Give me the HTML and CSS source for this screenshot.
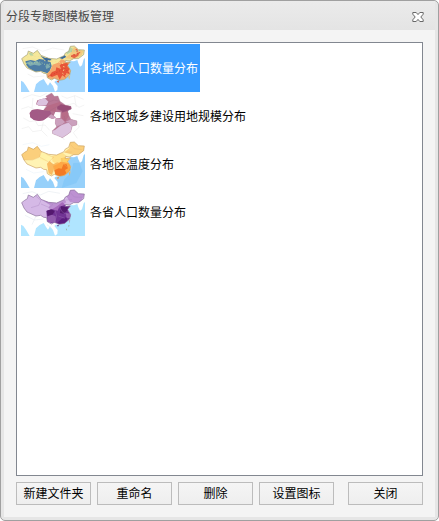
FILE: index.html
```html
<!DOCTYPE html>
<html lang="zh-CN">
<head>
<meta charset="utf-8">
<title>分段专题图模板管理</title>
<link rel="stylesheet" href="styles.css">
</head>
<body>
<svg class="defs" aria-hidden="true">
  <defs>
    <path id="country" d="M17 50L26 43L34 38L37 27L52 34L64 25L75 40L98 49L122 51L144 41L148 33L158 28L163 13L175 12L187 23L205 24L203 38L187 50L173 50L160 57L149 55L147 61L163 60L155 70L164 86L161 99L146 112L130 115L115 109L106 114L94 107L92 95L83 94L74 88L60 90L33 78L24 66Z"/>
    <path id="coast" d="M15 6H207V48L203 52L198 70L192 74L187 64L184 54L174 58L160 57L163 62L156 70L164 86L161 99L146 112L130 115L119 116L115 120L125 132L124 144L117 149L111 132L102 121L96 131L90 123L83 111L71 117L60 127L54 150H41L30 131L22 120L15 116Z"/>
    <clipPath id="country-clip"><use href="#country"/></clipPath>
  </defs>
</svg>
<main class="dialog">
  <header class="titlebar">
    <h1>分段专题图模板管理</h1>
    <button class="close" type="button" aria-label="关闭窗口">
      <svg viewBox="0 0 12 10"><path d="M.8.5H4.2L6 2.6 7.8.5H11.2V2.2L8.8 5 11.2 7.8V9.5H7.8L6 7.4 4.2 9.5H.8V7.8L3.2 5 .8 2.2Z"/></svg>
    </button>
  </header>
  <section class="content">
    <ul class="templates">
      <li>
        <svg class="thumb" viewBox="15 6 192 144">
          <path fill="#9fd5ff" d="M15 6H207V150H15Z"/><use href="#coast" fill="#fff"/>
          <path d="M20 20L50 15L80 28L110 18L145 24M35 96L53 105L85 102" fill="none" stroke="#eee" stroke-width="2"/>
          <use href="#country" fill="#f1e498"/>
          <g clip-path="url(#country-clip)">
            <path fill="#4d7da5" d="M28 58L44 54L58 57L70 51L88 53L104 61L107 73L101 87L94 94L76 88L57 89L38 78L31 69Z"/>
            <path fill="#80adb0" d="M31 62L43 57L52 62L61 55L70 63L78 66L70 71L55 68L42 72ZM88 71L98 67L103 75L91 81Z"/>
            <path fill="#f4e89b" d="M37 33L51 28L68 34L76 46L62 53L50 49L30 54L22 51ZM106 53L126 49L137 60L124 72L105 65Z"/>
            <path fill="#3a6a9b" d="M73 41L88 48L97 46L107 54L91 58ZM128 47L145 39L151 45L139 51Z"/>
            <path fill="#f5a66b" d="M110 68L126 62L137 51L149 57L164 61L166 88L157 107L129 118L95 108L91 98L104 83Z"/>
            <path fill="#e85538" d="M137 65L151 63L158 65L154 75L163 79L157 87L162 97L151 93L149 107L139 100L131 113L124 98L108 105L100 101L108 90L119 86L121 76L135 81L131 70Z"/>
            <path fill="#f3ca7e" d="M147 49L163 35L166 23L179 13L188 22L202 27L197 39L185 47L170 51Z"/>
            <path fill="#e76645" d="M165 42L173 36L182 38L183 32L191 31L187 41L175 49L168 46ZM178 22L183 20L187 28L182 31Z"/>
            <path fill="#b9d4a3" d="M151 32L162 15L171 21L165 31L153 37ZM38 34L46 32L53 40L45 43Z"/>
          </g>
          <g clip-path="url(#country-clip)" fill="none">
            <path d="M23 49L45 42L68 44L86 56L113 58L139 62L145 78L140 94L152 105" stroke="#f5df91" stroke-width="3" stroke-dasharray="4 7"/>
            <path d="M97 103L112 97L130 87L145 78L158 91M165 43L178 38L193 31" stroke="#ce3f31" stroke-width="3" stroke-dasharray="3 6"/>
            <path d="M30 65L50 63L73 60L88 68L103 66M157 29L171 27L193 25" stroke="#a3c9a0" stroke-width="3" stroke-dasharray="3 5"/>
          </g>
          <use href="#country" class="outline" stroke="#a4a17c"/>
          <path fill="#e55e3d" d="M122 118L130 115L127 123Z"/><path fill="#e5bd72" d="M157 106L163 99L160 113Z"/>
        </svg>
        <button class="name selected" type="button" aria-pressed="true">各地区人口数量分布</button>
      </li>
      <li>
        <svg class="thumb" viewBox="15 6 192 144">
          <path fill="#fff" d="M15 6H207V150H15Z"/>
          <path d="M20 25L48 14L72 20L92 10M16 57L37 50L61 61M22 84L42 95L58 92L66 107L87 105L101 121M17 116L38 110L50 125L76 121L94 139M137 18L153 25L177 17L203 28M153 45L174 40L189 52L205 45M170 71L202 77M181 91L190 111L172 128L184 145M51 24L48 54M82 96L76 121M175 17L181 51M131 129L145 150" fill="none" stroke="#ededed" stroke-width="2"/>
          <path fill="#b97795" d="M89 19L107 9L115 19L126 18L132 34L148 45L165 49L166 57L155 62L158 75L165 88L183 93L182 105L169 108L164 126L153 134L139 143L124 136L110 131L109 122L122 110L117 98L119 85L133 84L134 67L118 66L113 77L120 83L109 87L96 81L82 91L69 93L54 90L43 82L41 69L48 60L64 58L83 61L92 48L69 47L60 43L64 31L78 27L93 23Z"/>
          <path fill="#dcc3df" d="M61 43L68 30L86 24L97 35L91 46L72 47ZM117 120L137 104L157 97L168 108L164 126L153 134L139 143L110 131L109 122Z"/>
          <path fill="#a35a86" d="M48 60L64 58L83 61L102 62L106 72L96 81L82 91L69 93L54 90L43 82L41 69Z"/>
          <path fill="#984d77" d="M123 48L133 42L148 46L165 49L166 57L155 62L157 73L143 76L136 62L124 58Z"/>
          <path fill="#b76b87" d="M95 47L121 39L132 35L134 44L122 51L119 65L101 63L83 61ZM137 68L155 62L158 79L147 96L137 86Z"/>
          <path fill="#cba0bd" d="M119 85L137 86L147 96L137 105L122 110L117 98ZM109 87L120 82L113 77L105 73L96 81ZM147 96L165 88L183 93L182 105L169 108L157 97Z"/>
          <path d="M93 23L100 35L91 47L83 61L102 62L121 51L133 42M101 35L114 30L132 34M101 63L113 77M63 59L70 74L66 91M123 58L143 64L155 62M122 110L141 103L158 97M145 78L148 95" fill="none" stroke="#9d6885"/>
          <path d="M89 19L107 9L115 19L126 18L132 34L148 45L165 49L166 57L155 62L158 75L165 88L183 93L182 105L169 108L164 126L153 134L139 143L110 131L109 122L122 110L117 98" fill="none" stroke="#b696a4"/>
        </svg>
        <button class="name" type="button">各地区城乡建设用地规模分布</button>
      </li>
      <li>
        <svg class="thumb" viewBox="15 6 192 144">
          <path fill="#96d0fa" d="M15 6H207V150H15Z"/><path fill="#70bdf5" d="M145 124L165 105L172 75L190 74L200 100L181 135L137 150Z" opacity=".4"/><use href="#coast" fill="#fff"/>
          <path d="M20 20L50 14L76 25L100 20M30 94L53 105L83 101" fill="none" stroke="#edf5fb" stroke-width="2"/>
          <use href="#country" fill="#fff3b4"/>
          <g clip-path="url(#country-clip)">
            <path fill="#fbcf7c" d="M15 45L38 27L70 22L78 40L72 56L50 65L20 66ZM145 43L160 31L162 6L207 20V48L172 51Z"/>
            <path fill="#fff2a7" d="M73 44L95 49L114 58L99 70L72 66Z"/>
            <path fill="#ffe18c" d="M109 54L140 44L158 60L144 76L120 78L109 70Z"/>
            <path fill="#f9ba61" d="M93 77L101 69L111 79L124 73L138 77L130 91L114 94L107 111L98 106Z"/>
            <path fill="#ffa744" d="M111 84L124 79L137 69L154 73L167 82L166 98L153 117L121 115Z"/>
            <path fill="#f37a25" d="M115 97L128 91L137 92L142 79L152 79L156 91L147 96L151 106L137 116L118 111Z"/>
            <path fill="#ffcf66" d="M134 61L149 57L166 65L152 74L135 71Z"/>
            <path d="M75 43L70 58L49 66L22 66M72 58L98 72L113 58L91 49M108 75L116 91L107 112M137 60L140 76L155 88M164 20L175 32L199 35M145 43L167 42" fill="none" stroke="#ebb36a"/>
          </g>
          <use href="#country" class="outline" stroke="#cba264"/><path fill="#f57e25" d="M123 119L129 117L126 124Z"/><path fill="#e5b36f" d="M158 104L164 99L161 114Z"/>
        </svg>
        <button class="name" type="button">各地区温度分布</button>
      </li>
      <li>
        <svg class="thumb" viewBox="15 6 192 144">
          <path fill="#b0e5ff" d="M15 6H207V150H15Z"/><use href="#coast" fill="#fff"/>
          <path d="M20 23L48 17L73 27L98 16L132 22M27 88L55 102L82 99M60 90L48 116M93 116L106 126" fill="none" stroke="#e7edf1" stroke-width="2"/>
          <use href="#country" fill="#d5b9e6"/>
          <g clip-path="url(#country-clip)">
            <path fill="#bd91d2" d="M78 42L111 49L144 37L151 49L137 58L125 64L109 72L97 66L102 57ZM147 25L163 6L207 21L194 50L162 48Z"/>
            <path fill="#a66abb" d="M106 71L123 61L139 49L149 57L164 61L154 72L140 68L133 82L112 82Z"/>
            <path fill="#713394" d="M91 75L108 70L125 74L130 62L149 56L165 62L156 73L166 92L151 114L124 116L94 107Z"/>
            <path fill="#54196f" d="M92 74L105 70L116 75L111 84L104 92L95 91ZM135 61L151 63L158 65L153 75L142 83L132 81Z"/>
            <path fill="#925bad" d="M94 91L108 86L119 91L119 112L94 107ZM150 81L169 83L165 96L151 96Z"/>
            <path fill="#5b1c7f" d="M137 98L151 94L155 105L145 116L129 120L123 111Z"/>
            <path d="M59 30L75 43L68 58L45 65M75 54L101 65L111 55L91 49M117 72L122 91L113 112M130 63L140 79L157 87M127 90L147 97M163 20L175 33L199 34M149 42L168 41" fill="none" stroke="#a580bc"/>
          </g>
          <use href="#country" class="outline" stroke="#886e98"/><path fill="#623384" d="M123 118L129 116L126 122Z"/><path fill="#b6a6c4" d="M158 104L163 99L161 113Z"/>
          <path d="M159 117L158 122M151 128L152 133" stroke="#a0baab" stroke-width="3"/>
        </svg>
        <button class="name" type="button">各省人口数量分布</button>
      </li>
    </ul>
    <footer class="actions">
      <button type="button">新建文件夹</button>
      <button type="button">重命名</button>
      <button type="button">删除</button>
      <button type="button">设置图标</button>
      <button class="dismiss" type="button">关闭</button>
    </footer>
  </section>
</main>
</body>
</html>
```
FILE: styles.css
```css
* { box-sizing: border-box; }
body {
  margin: 0;
  background: #fff;
  color: #000;
  font: 12px/16px "Noto Sans CJK SC", sans-serif;
}
button {
  margin: 0;
  padding: 0;
  color: inherit;
  font: inherit;
  white-space: nowrap;
}
.defs { position: absolute; width: 0; height: 0; }
.dialog {
  display: flex;
  flex-direction: column;
  min-height: 100vh;
  padding: 0 3px 3px;
  border: 1px solid #a0a0a0;
  border-radius: 5px;
  background: #e6e6e6;
}
.titlebar {
  display: flex;
  align-items: center;
  justify-content: space-between;
  height: 29px;
  padding: 0 10px 0 2px;
  background: linear-gradient(#ebebeb, #e4e4e4);
}
h1 {
  margin: 0;
  color: #484848;
  font-size: 12px;
  font-weight: 400;
}
.close {
  width: 14px;
  height: 14px;
  padding-top: 2px;
  border: 0;
  background: none;
}
.close svg { display: block; width: 12px; height: 10px; margin: auto; }
.close path { fill: #fff; stroke: #686868; }
.content {
  display: flex;
  flex: 1;
  flex-direction: column;
  gap: 6px;
  padding: 12px;
  background: #f4f4f4;
}
.templates {
  flex: 1;
  margin: 0;
  padding: 1px 4px;
  border: 1px solid #828790;
  background: #fff;
  list-style: none;
}
.templates li { display: flex; gap: 3px; height: 48px; }
.thumb { width: 64px; height: 48px; }
.outline { fill: none; stroke-width: 2; }
.name { padding: 0 2px; border: 0; background: none; }
.selected { background: #3399ff; color: #fff; }
.actions { display: flex; gap: 6px; }
.actions button {
  flex: 0 1 75px;
  height: 23px;
  padding-bottom: 2px;
  border: 1px solid #bcbcbc;
  background: linear-gradient(#f5f5f5, #eeeeee);
}
.actions .dismiss { margin-left: auto; }
```
